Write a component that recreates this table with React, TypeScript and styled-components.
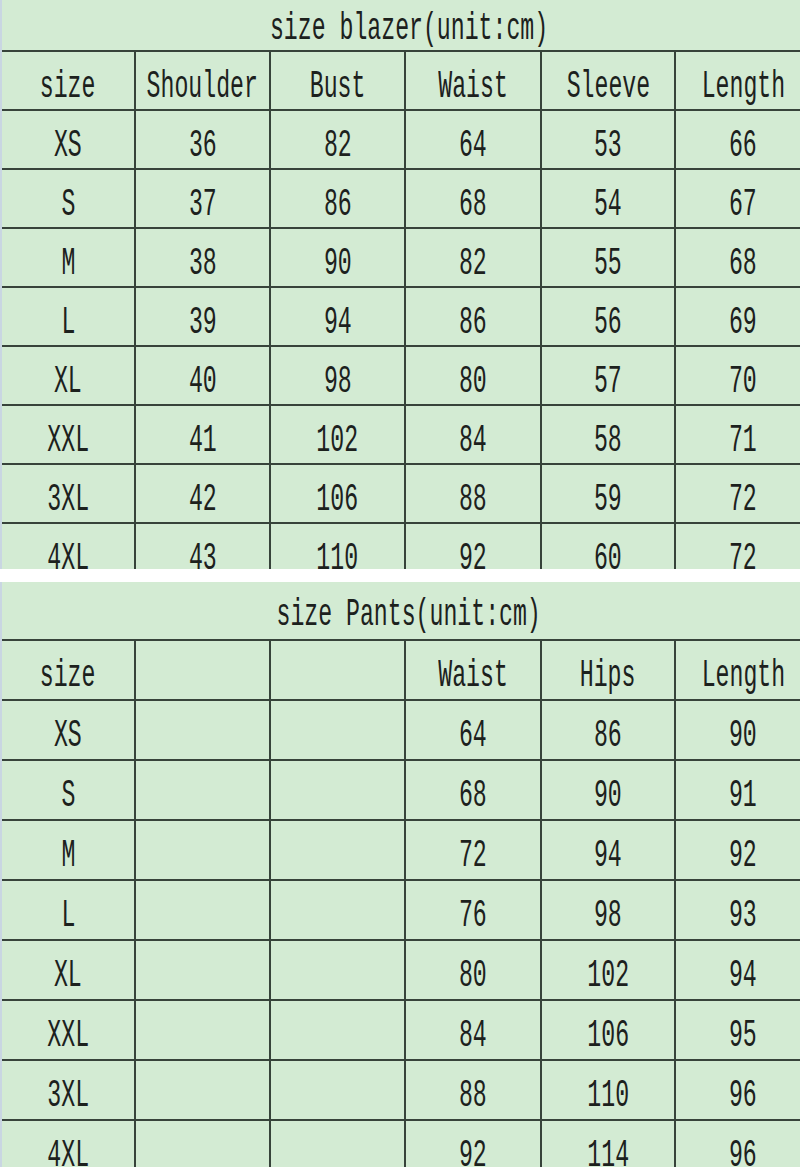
import React from "react";
import styled, { createGlobalStyle } from "styled-components";

const blazerHead = ["size", "Shoulder", "Bust", "Waist", "Sleeve", "Length"];
const blazerRows = [
  ["XS", "36", "82", "64", "53", "66"],
  ["S", "37", "86", "68", "54", "67"],
  ["M", "38", "90", "82", "55", "68"],
  ["L", "39", "94", "86", "56", "69"],
  ["XL", "40", "98", "80", "57", "70"],
  ["XXL", "41", "102", "84", "58", "71"],
  ["3XL", "42", "106", "88", "59", "72"],
  ["4XL", "43", "110", "92", "60", "72"],
];

const pantsHead = ["size", "", "", "Waist", "Hips", "Length"];
const pantsRows = [
  ["XS", "", "", "64", "86", "90"],
  ["S", "", "", "68", "90", "91"],
  ["M", "", "", "72", "94", "92"],
  ["L", "", "", "76", "98", "93"],
  ["XL", "", "", "80", "102", "94"],
  ["XXL", "", "", "84", "106", "95"],
  ["3XL", "", "", "88", "110", "96"],
  ["4XL", "", "", "92", "114", "96"],
];

const SizeTable = ({
  title,
  head,
  rows,
  titleH,
  rowH,
  height,
}: {
  title: string;
  head: string[];
  rows: string[][];
  titleH: number;
  rowH: number;
  height: number;
}) => (
  <Sheet $height={height}>
    <Grid $titleH={titleH} $rowH={rowH}>
      <TitleCell>
        <Txt>{title}</Txt>
      </TitleCell>
      {head.map((h, i) => (
        <Cell key={"h" + i}>{h && <Txt>{h}</Txt>}</Cell>
      ))}
      {rows.map((r, ri) =>
        r.map((c, ci) => (
          <Cell key={ri + "-" + ci}>{c && <Txt>{c}</Txt>}</Cell>
        ))
      )}
    </Grid>
  </Sheet>
);

const App = () => {
  return (
    <Page>
      <GlobalStyle />
      <SizeTable
        title="size blazer(unit:cm)"
        head={blazerHead}
        rows={blazerRows}
        titleH={50}
        rowH={57}
        height={569}
      />
      <Spacer />
      <SizeTable
        title="size Pants(unit:cm)"
        head={pantsHead}
        rows={pantsRows}
        titleH={57}
        rowH={58}
        height={585}
      />
    </Page>
  );
};

export default App;

const GlobalStyle = createGlobalStyle`
  html, body {
    margin: 0;
    padding: 0;
    background: #ffffff;
  }
  body {
    overflow: hidden;
  }
`;

const Page = styled.div`
  width: 800px;
  height: 1167px;
  overflow: hidden;
  display: flex;
  flex-direction: column;
`;

const Spacer = styled.div`
  height: 13px;
  flex-shrink: 0;
`;

const Sheet = styled.div<{ $height: number }>`
  height: ${(p) => p.$height}px;
  flex-shrink: 0;
  overflow: hidden;
  border-left: 2px solid #c9d6e2;
`;

const Grid = styled.div<{ $titleH: number; $rowH: number }>`
  width: 810px;
  display: grid;
  grid-template-columns: 132px 133px 133px 134px 132px 134px;
  grid-template-rows: ${(p) => p.$titleH}px;
  grid-auto-rows: ${(p) => p.$rowH}px;
  gap: 2px;
  background: #37433a;
  font-family: "Liberation Mono", "DejaVu Sans Mono", monospace;
  font-size: 38px;
  color: #1c211d;
`;

const Cell = styled.div`
  background: #d3ebd3;
  display: flex;
  align-items: center;
  justify-content: center;
  padding-top: 12px;
  box-sizing: border-box;
  white-space: nowrap;
`;

const TitleCell = styled(Cell)`
  grid-column: 1 / -1;
  padding-left: 6px;
  padding-top: 8px;
`;

const Txt = styled.span`
  display: inline-block;
  transform: scaleX(0.61);
  line-height: 1;
`;
